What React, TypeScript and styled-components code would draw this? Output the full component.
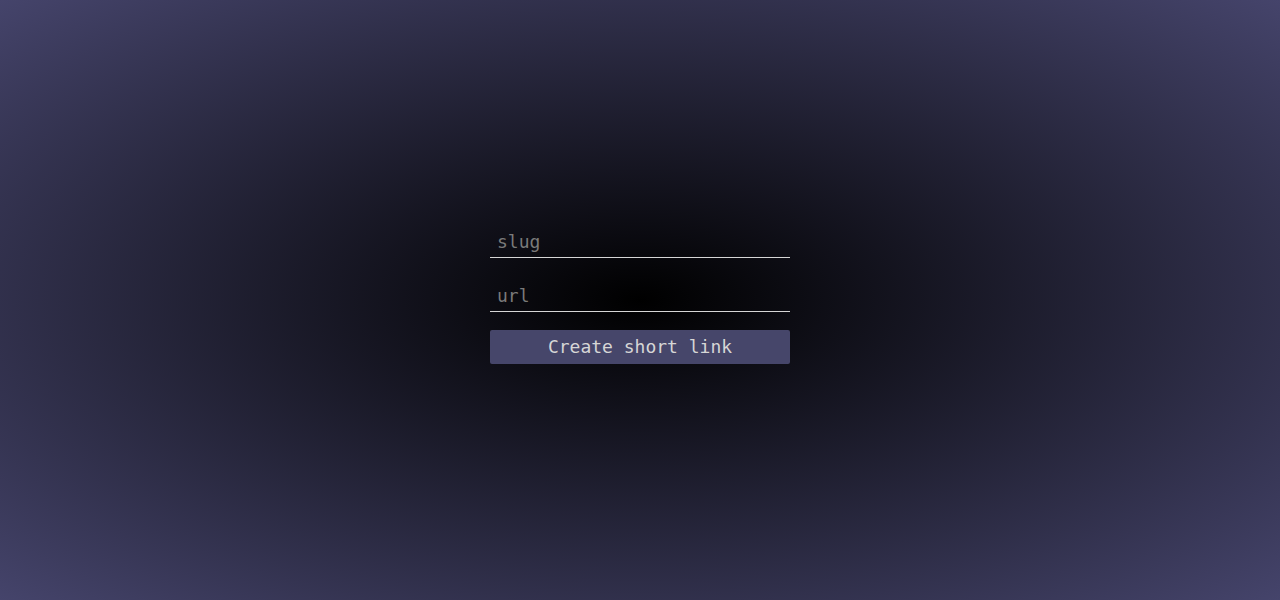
import React from "react";
import styled, { createGlobalStyle } from "styled-components";

const Global = createGlobalStyle`
  html, body { margin: 0; padding: 0; height: 100%; }
  body {
    font-family: "DejaVu Sans Mono", monospace;
    background: radial-gradient(ellipse farthest-corner at 50% 50%, #000000 0%, #45446b 100%);
    background-attachment: fixed;
  }
  #root { height: 100%; }
`;

const Page = styled.main`
  height: 600px;
  display: flex;
  align-items: center;
  justify-content: center;
`;

const Form = styled.form`
  width: 300px;
  display: flex;
  flex-direction: column;
  gap: 18px;
  margin-top: -14px;
`;

const Field = styled.input`
  box-sizing: border-box;
  height: 36px;
  width: 100%;
  padding: 3px 7px 0;
  background: transparent;
  border: none;
  border-bottom: 1px solid #d6d6d6;
  color: #ddd;
  font-family: "DejaVu Sans Mono", monospace;
  font-size: 18px;
  outline: none;
  &::placeholder { color: #7a7a7a; }
`;

const Button = styled.button`
  height: 34px;
  width: 100%;
  padding: 0 0 2px;
  border: none;
  border-radius: 2px;
  background: #46466a;
  color: #d6d6d6;
  font-family: "DejaVu Sans Mono", monospace;
  font-size: 18px;
  font-weight: 500;
  cursor: pointer;
`;

export default function App() {
  return (
    <>
      <Global />
      <Page>
        <Form onSubmit={(e) => e.preventDefault()}>
          <Field placeholder="slug" />
          <Field placeholder="url" />
          <Button type="submit">Create short link</Button>
        </Form>
      </Page>
    </>
  );
}
